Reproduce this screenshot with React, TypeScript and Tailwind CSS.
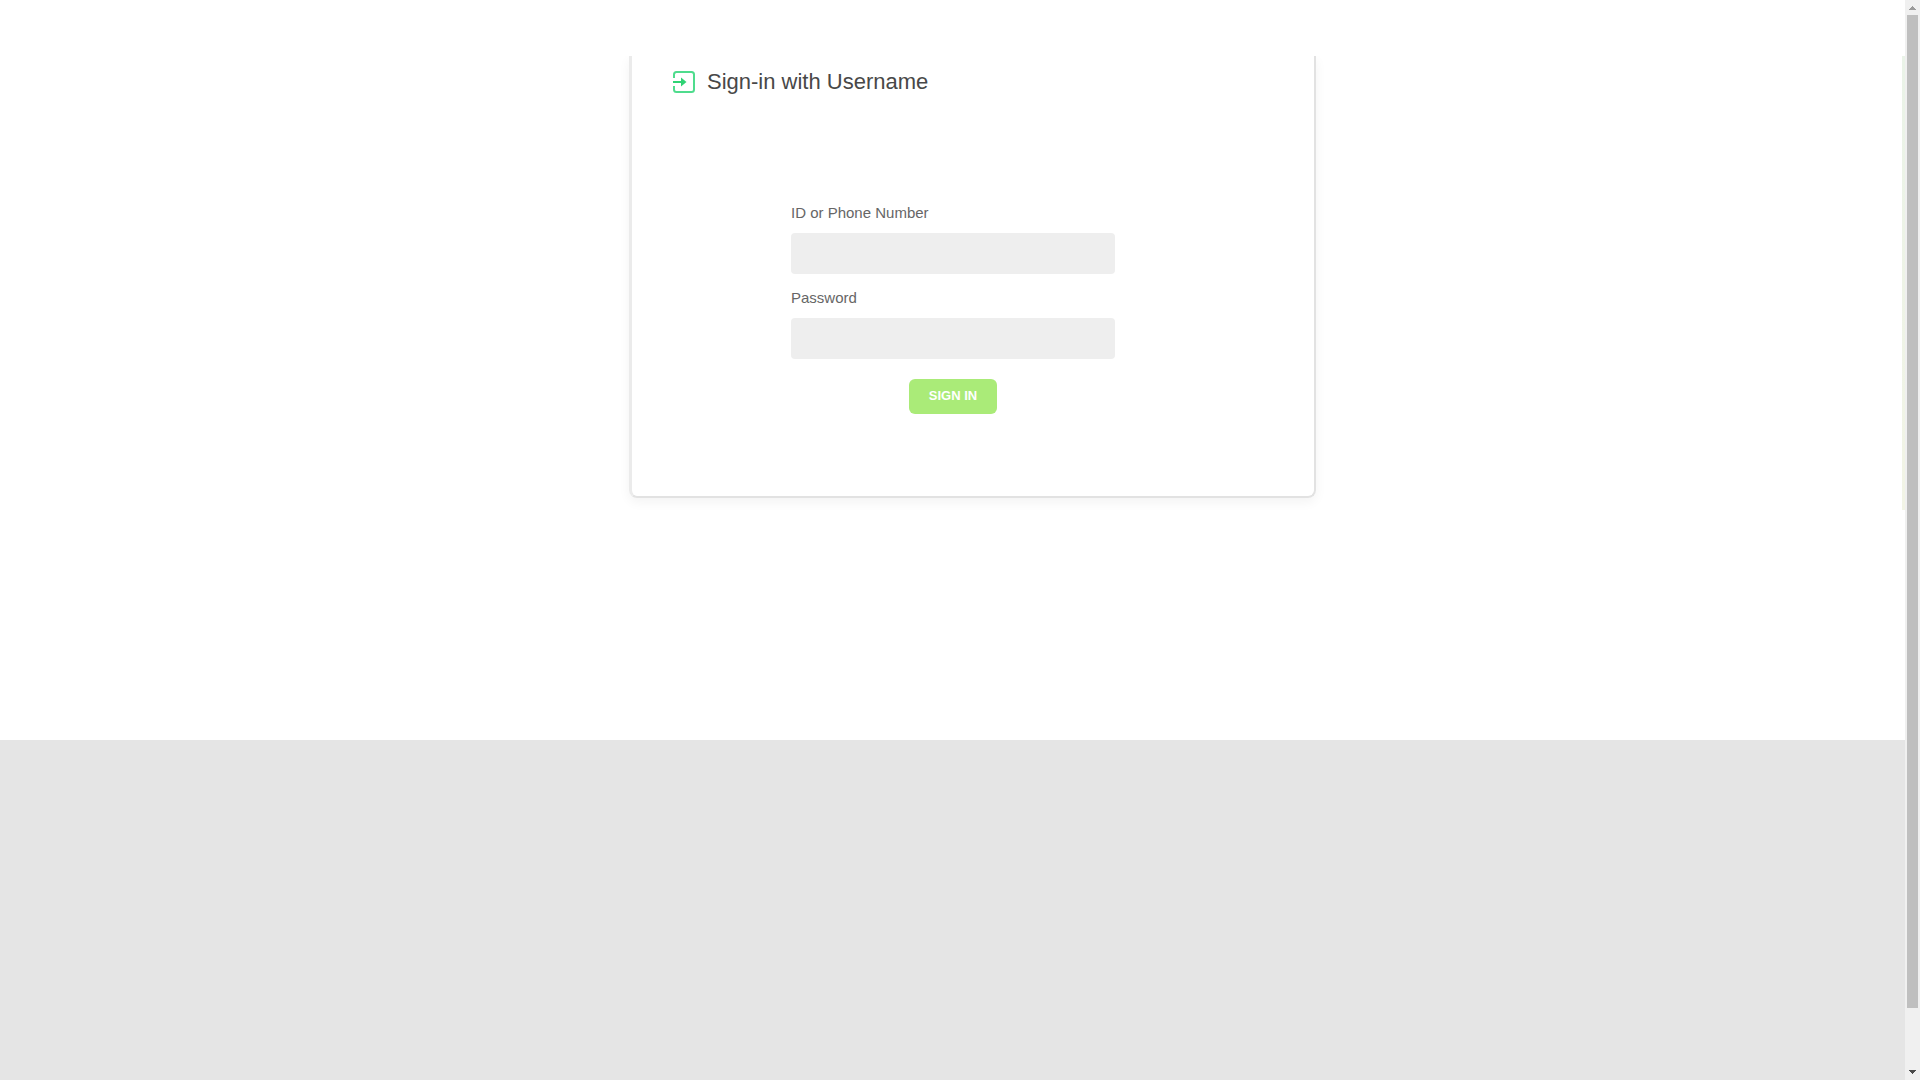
function SignInIcon() {
  return (
    <svg width="22" height="22" viewBox="0 0 22 22" fill="none" stroke="#4fdc8d" strokeWidth="2" aria-hidden="true">
      <path d="M1 7V3.500Q1 1 3.500 1H18.500Q21 1 21 3.500V18.500Q21 21 18.500 21H3.500Q1 21 1 18.500V15" />
      <path d="M0 11H9" stroke="#2fd374" />
      <path d="M8 6.500L13.500 11L8 15.500Z" fill="#2fd374" stroke="none" />
    </svg>
  );
}

function Field({ id, label, type }: { id: string; label: string; type: string }) {
  return (
    <div className="flex flex-col">
      <label htmlFor={id} className="h-11 pt-3.5 text-[15px] leading-5 text-[#666666]">
        {label}
      </label>
      <input id={id} type={type} className="h-[41px] w-full rounded bg-[#eeeeee] px-3 outline-none" />
    </div>
  );
}

export default function App() {
  return (
    <div className="flex h-screen overflow-hidden bg-white font-['Liberation_Sans',Arial,sans-serif]">
      <div className="flex min-w-0 flex-1 flex-col">
        <header className="h-14 shrink-0 bg-white" />
        <main className="flex h-[684px] shrink-0 items-start justify-center overflow-hidden">
          <div className="flex flex-1 justify-center pl-10">
            <section className="w-full max-w-[687px] rounded-b-lg border-2 border-t-0 border-l-3 border-[#e2e2e2] border-l-[#ebebeb] pb-[82px] shadow-[0_4px_12px_rgba(0,0,0,0.05)]">
              <h1 className="flex items-center gap-3 pt-3 pl-[41px] text-[22px] leading-7 text-[#484848]">
                <SignInIcon />
                Sign-in with Username
              </h1>
              <form className="mt-[93px] ml-[159px] flex w-[324px] flex-col" onSubmit={(e) => e.preventDefault()}>
                <Field id="username" label="ID or Phone Number" type="text" />
                <Field id="password" label="Password" type="password" />
                <button type="submit" className="mt-5 h-[35px] self-center rounded-md bg-[#aaeb78] px-5 pb-0.5 text-[13px] font-bold text-white">
                  SIGN IN
                </button>
              </form>
            </section>
          </div>
          <div className="-ml-[3px] h-[454px] w-[3px] bg-linear-to-b from-[#eaf3e8] to-[#f2f4e6]" />
        </main>
        <footer className="flex-1 bg-[#e5e5e5]" />
      </div>
      <div className="flex w-[15px] shrink-0 flex-col items-center justify-between bg-[#f0f0f0]" aria-hidden="true">
        <svg width="15" height="15" viewBox="0 0 15 15" shapeRendering="crispEdges">
          <path d="M4 10V9H5V8H6V7H7V6H8V7H9V8H10V9H11V10Z" fill="#9a9a9a" />
        </svg>
        <div className="mb-[57px] w-[11px] flex-1 bg-[#bfbfbf]" />
        <svg width="15" height="15" viewBox="0 0 15 15" shapeRendering="crispEdges">
          <path d="M4 5V6H5V7H6V8H7V9H8V8H9V7H10V6H11V5Z" fill="#4b4b4b" />
        </svg>
      </div>
    </div>
  );
}
